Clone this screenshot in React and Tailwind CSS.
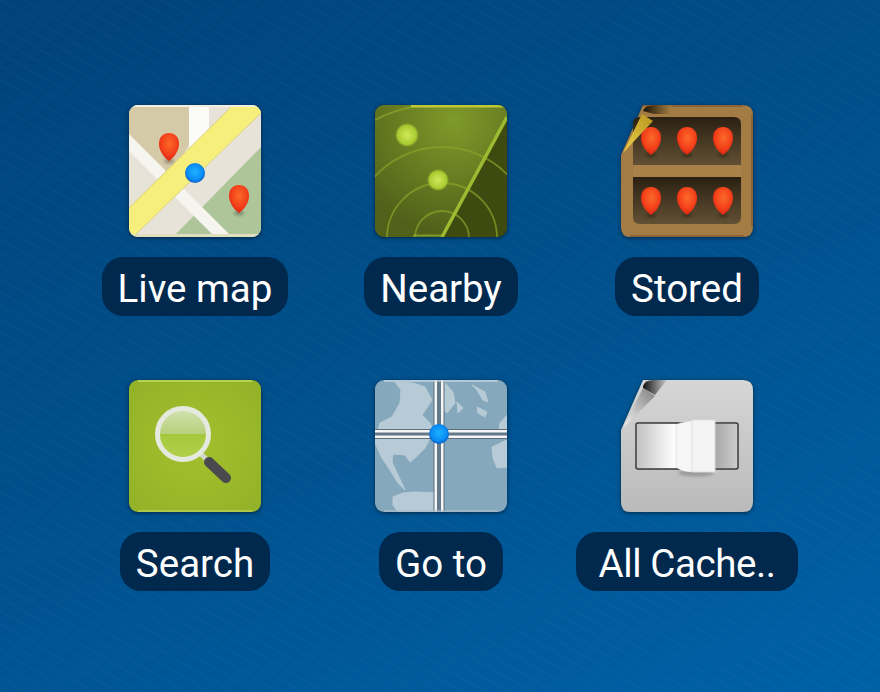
import React from "react";

// red map pin, cx/top give its place
function Pin({ cx, top, id }) {
  const y = top;
  return (
    <g>
      <ellipse cx={cx} cy={y + 28} rx="5" ry="2.5" fill="#000" opacity="0.28" className="blur-[1.5px]" />
      <path
        d={`M${cx} ${y + 28} C${cx - 4} ${y + 25} ${cx - 10} ${y + 19} ${cx - 10} ${y + 11} C${cx - 10} ${y + 4} ${cx - 6} ${y} ${cx} ${y} C${cx + 6} ${y} ${cx + 10} ${y + 4} ${cx + 10} ${y + 11} C${cx + 10} ${y + 19} ${cx + 4} ${y + 25} ${cx} ${y + 28}Z`}
        fill={`url(#${id})`}
      />
    </g>
  );
}

function BlueDot({ cx, cy, id }) {
  return (
    <g>
      <defs>
        <radialGradient id={id} cx="50%" cy="45%" r="55%">
          <stop offset="0%" stopColor="#1cb2ff" />
          <stop offset="72%" stopColor="#0a8cf6" />
          <stop offset="100%" stopColor="#0a5cc0" />
        </radialGradient>
      </defs>
      <circle cx={cx} cy={cy} r="10" fill={`url(#${id})`} />
    </g>
  );
}

function PinGradient({ id }) {
  return (
    <radialGradient id={id} cx="52%" cy="38%" r="62%">
      <stop offset="0%" stopColor="#fb6a28" />
      <stop offset="60%" stopColor="#f4431c" />
      <stop offset="100%" stopColor="#dc2410" />
    </radialGradient>
  );
}

function IconSvg({ children }) {
  return (
    <svg
      width="132"
      height="132"
      viewBox="0 0 132 132"
      className="block blur-[0.7px] drop-shadow-[0_1px_2px_rgba(0,0,0,0.5)]"
    >
      {children}
    </svg>
  );
}

function LiveMapIcon() {
  return (
    <IconSvg>
      <defs>
        <clipPath id="mapClip"><rect width="132" height="132" rx="9" /></clipPath>
        <PinGradient id="pinMap" />
      </defs>
      <g clipPath="url(#mapClip)">
        <rect width="132" height="132" fill="#e8e3d8" />
        <path d="M0 0H60V40L40 72L0 32Z" fill="#d5caa8" />
        <path d="M132 42V132H44Z" fill="#aec59a" />
        <path d="M60 0H80V40L60 50Z" fill="#fbfbf9" />
        <path d="M0 29L103 132H86L0 46Z" fill="#f6f4ee" />
        <path d="M104 0H132V8L4 132H0V103Z" fill="#f6ef7c" />
        <path d="M104 0L0 103M132 8L4 132" stroke="#d8d07e" strokeWidth="1" />
        <path d="M0 130.5H132" stroke="#dfdfc0" strokeWidth="3" />
        <path d="M0 1H132" stroke="#f1efe2" strokeWidth="2" />
      </g>
      <Pin cx={40} top={28} id="pinMap" />
      <Pin cx={110} top={80} id="pinMap" />
      <BlueDot cx={66} cy={68} id="dotMap" />
    </IconSvg>
  );
}

function NearbyIcon() {
  return (
    <IconSvg>
      <defs>
        <clipPath id="radarClip"><rect width="132" height="132" rx="9" /></clipPath>
        <radialGradient id="radarLit" cx="60%" cy="12%" r="85%">
          <stop offset="0%" stopColor="#7f9a2a" />
          <stop offset="100%" stopColor="#51611a" />
        </radialGradient>
        <radialGradient id="radarBall" cx="50%" cy="50%" r="50%">
          <stop offset="0%" stopColor="#d2e85a" />
          <stop offset="78%" stopColor="#a8ca30" />
          <stop offset="100%" stopColor="#a8ca30" stopOpacity="0" />
        </radialGradient>
      </defs>
      <g clipPath="url(#radarClip)">
        <rect width="132" height="132" fill="#3e4a10" />
        <path d="M0 0H132V12L67 132H0Z" fill="url(#radarLit)" />
        <g fill="none" stroke="#8aa42c" strokeWidth="1.8" opacity="0.7">
          <circle cx="67" cy="133" r="27" />
          <circle cx="67" cy="133" r="55" />
          <circle cx="67" cy="133" r="91" />
          <path d="M0 15A134 134 0 0 1 42 1" strokeWidth="2" />
        </g>
        <path d="M132 12L67 132" stroke="#9cbb30" strokeWidth="3.5" />
        <path d="M38 130.5H67" stroke="#a0bf30" strokeWidth="2" opacity="0.6" />
        <path d="M36 1H132" stroke="#bcc838" strokeWidth="3" />
        <circle cx="32" cy="30" r="12" fill="url(#radarBall)" />
        <circle cx="63" cy="75" r="11" fill="url(#radarBall)" />
      </g>
    </IconSvg>
  );
}

function StoredIcon() {
  return (
    <IconSvg>
      <defs>
        <PinGradient id="pinShelf" />
        <linearGradient id="shelfBg" x1="0" y1="0" x2="0" y2="1">
          <stop offset="0%" stopColor="#2a2012" />
          <stop offset="100%" stopColor="#625034" />
        </linearGradient>
        <linearGradient id="shelfFold" x1="0" y1="0" x2="1" y2="0">
          <stop offset="0%" stopColor="#1a1206" />
          <stop offset="100%" stopColor="#a57d42" />
        </linearGradient>
        <linearGradient id="shelfTip" x1="0" y1="1" x2="1" y2="0">
          <stop offset="0%" stopColor="#ecd24a" />
          <stop offset="100%" stopColor="#b8941f" />
        </linearGradient>
      </defs>
      <path d="M0 50L22 0H122Q132 0 132 10V122Q132 132 122 132H9Q0 132 0 122Z" fill="#a37b45" />
      <path d="M9 131H123" stroke="#8a6436" strokeWidth="2" />
      <path d="M131 10V122" stroke="#8a6436" strokeWidth="2" />
      <path d="M22 1H122" stroke="#8a6436" strokeWidth="2" />
      <path d="M19 12H113Q120 12 120 19V60H12V19Q12 12 19 12Z" fill="url(#shelfBg)" />
      <path d="M12 72H120V112Q120 119 113 119H19Q12 119 12 112Z" fill="url(#shelfBg)" />
      <rect x="12" y="60" width="108" height="12" fill="#a98148" />
      <path d="M22 6Q24 0 34 0H50V9H33Z" fill="url(#shelfFold)" />
      <Pin cx={30} top={22} id="pinShelf" />
      <Pin cx={66} top={22} id="pinShelf" />
      <Pin cx={102} top={22} id="pinShelf" />
      <Pin cx={30} top={82} id="pinShelf" />
      <Pin cx={66} top={82} id="pinShelf" />
      <Pin cx={102} top={82} id="pinShelf" />
      <path d="M2 48L21 9L32 16Z" fill="url(#shelfTip)" />
    </IconSvg>
  );
}

function SearchIcon() {
  return (
    <IconSvg>
      <defs>
        <linearGradient id="lens" x1="0" y1="0" x2="0" y2="1">
          <stop offset="0%" stopColor="#d4e2b2" />
          <stop offset="50%" stopColor="#b6d07c" />
          <stop offset="50%" stopColor="#a4c83a" />
          <stop offset="100%" stopColor="#b2d04c" />
        </linearGradient>
        <radialGradient id="searchBg" cx="50%" cy="50%" r="70%">
          <stop offset="0%" stopColor="#a2c02c" />
          <stop offset="100%" stopColor="#93b128" />
        </radialGradient>
      </defs>
      <rect width="132" height="132" rx="9" fill="url(#searchBg)" />
      <path d="M9 1H123" stroke="#b8d050" strokeWidth="2" />
      <path d="M9 131H123" stroke="#b8d050" strokeWidth="1.5" />
      <path d="M71 73L79 81" stroke="#d4d6ca" strokeWidth="5" />
      <path d="M80 82L97 98" stroke="#4a4a4e" strokeWidth="10" strokeLinecap="round" />
      <circle cx="54" cy="54" r="25.5" fill="url(#lens)" stroke="#e6e9de" strokeWidth="5" />
    </IconSvg>
  );
}

function GoToIcon() {
  return (
    <IconSvg>
      <defs>
        <clipPath id="globeClip"><rect width="132" height="132" rx="9" /></clipPath>
      </defs>
      <g clipPath="url(#globeClip)">
        <rect width="132" height="132" fill="#86a8bd" />
        <g fill="#b7cbd6" stroke="#b7cbd6" strokeWidth="1" strokeLinejoin="round">
          <path d="M20 2L38 3L50 7L57 20L47 35L55 43L58 50H3L5 43L17 37L25 23L26 10Z" />
          <path d="M0 58H55L50 68L40 78L35 82L30 75L18 74L17 82L23 95L30 110L23 103L15 90L7 78L0 63Z" />
          <path d="M18 117L28 113L40 112L60 113V132H23L18 125Z" />
          <path d="M70 3L78 12L80 23L72 33L69 30Z" />
          <path d="M82 22L88 28L83 33Z" />
          <path d="M97 5L110 12L113 22L108 20L102 10Z" />
          <path d="M102 27L112 32L110 37L103 33Z" />
          <path d="M117 67L132 60V87L122 88L118 78Z" />
          <path d="M125 43L132 35V50H124Z" />
        </g>
        <g fill="none">
          <path d="M64 0V132" stroke="#5c6f7c" strokeWidth="11" />
          <path d="M0 54H132" stroke="#5c6f7c" strokeWidth="10" />
          <path d="M64 0V132" stroke="#f4f5f4" strokeWidth="9" />
          <path d="M0 54H132" stroke="#f4f5f4" strokeWidth="8" />
          <path d="M64 0V132" stroke="#64798a" strokeWidth="4" />
          <path d="M0 54H132" stroke="#64798a" strokeWidth="3" />
        </g>
        <path d="M9 1H123" stroke="#c8d8e0" strokeWidth="2" opacity="0.7" />
        <path d="M9 131H123" stroke="#a8bcc8" strokeWidth="2" opacity="0.7" />
      </g>
      <BlueDot cx={64} cy={54} id="dotGlobe" />
    </IconSvg>
  );
}

function AllCacheIcon() {
  return (
    <IconSvg>
      <defs>
        <linearGradient id="plate" x1="0" y1="0" x2="0" y2="1">
          <stop offset="0%" stopColor="#d6d6d6" />
          <stop offset="100%" stopColor="#bababa" />
        </linearGradient>
        <linearGradient id="flipLeft" x1="0" y1="0" x2="1" y2="0">
          <stop offset="0%" stopColor="#c2c2c2" />
          <stop offset="100%" stopColor="#ffffff" />
        </linearGradient>
        <linearGradient id="flipRight" x1="0" y1="0" x2="1" y2="0">
          <stop offset="0%" stopColor="#a8a8a8" />
          <stop offset="100%" stopColor="#cccccc" />
        </linearGradient>
        <linearGradient id="foldDark" x1="0" y1="0" x2="1" y2="0">
          <stop offset="0%" stopColor="#141414" />
          <stop offset="100%" stopColor="#c8c8c8" />
        </linearGradient>
        <linearGradient id="foldTip" x1="0" y1="1" x2="1" y2="0">
          <stop offset="0%" stopColor="#f4f4f4" />
          <stop offset="100%" stopColor="#7e7e7e" />
        </linearGradient>
      </defs>
      <path d="M0 50L22 0H122Q132 0 132 10V122Q132 132 122 132H9Q0 132 0 122Z" fill="url(#plate)" />
      <path d="M22 6Q24 0 32 0H46L34 15L22 8Z" fill="url(#foldDark)" />
      <path d="M2 48L22 8L34 16Z" fill="url(#foldTip)" />
      <rect x="15" y="43" width="102" height="46" rx="2" fill="#f0f0f0" stroke="#35353a" strokeWidth="1.5" />
      <rect x="16" y="44" width="38" height="44" fill="url(#flipLeft)" />
      <rect x="94" y="44" width="22" height="44" fill="url(#flipRight)" />
      <ellipse cx="75" cy="93" rx="18" ry="3.5" fill="#000" opacity="0.2" className="blur-[1.5px]" />
      <path d="M56 44Q62 42 71 41V92Q62 92 56 88Z" fill="#f6f6f6" />
      <rect x="71" y="40" width="23" height="52" fill="#f4f4f4" stroke="#dddddd" strokeWidth="1" />
    </IconSvg>
  );
}

const shortcuts = [
  { label: "Live map", Icon: LiveMapIcon, pill: "px-4" },
  { label: "Nearby", Icon: NearbyIcon, pill: "px-4" },
  { label: "Stored", Icon: StoredIcon, pill: "px-4" },
  { label: "Search", Icon: SearchIcon, pill: "px-4" },
  { label: "Go to", Icon: GoToIcon, pill: "px-4" },
  { label: "All Cache..", Icon: AllCacheIcon, pill: "w-[222px] text-center tracking-[-0.4px]" },
];

export default function App() {
  return (
    <div className="h-[692px] w-[880px] overflow-hidden bg-[repeating-linear-gradient(30deg,transparent_0px,rgba(255,255,255,0.025)_1.5px,transparent_3px,transparent_11.5px),linear-gradient(155deg,#01427a_0%,#00528f_55%,#0061a7_100%)] pl-[72px] pt-[105px] font-['Roboto',sans-serif]">
      <div className="grid grid-cols-[repeat(3,246px)] gap-y-[64px]">
        {shortcuts.map(({ label, Icon, pill }) => (
          <div key={label} className="flex flex-col items-center">
            <Icon />
            <span className={`mt-[20px] h-[59px] whitespace-nowrap rounded-[21px] bg-[#01294e] text-[38.5px] leading-[63px] text-white ${pill}`}>
              {label}
            </span>
          </div>
        ))}
      </div>
    </div>
  );
}
